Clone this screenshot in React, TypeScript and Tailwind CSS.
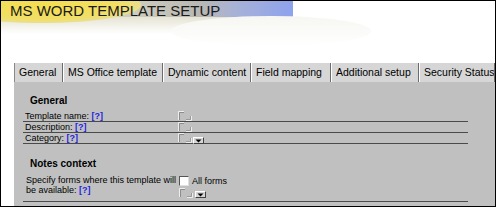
import React from 'react'

// small "broken image" placeholder used next to each field
function Placeholder() {
  return (
    <svg width="14" height="10" viewBox="0 0 14 10" className="block">
      <path d="M0.5 9 V0.5 H6" fill="none" stroke="#eeeeee" strokeWidth="1" />
      <path d="M1.5 9 V1.5 H6" fill="none" stroke="#8c8c8c" strokeWidth="1" />
      <path d="M8 9.5 H13.5 V5" fill="none" stroke="#eeeeee" strokeWidth="1" />
      <path d="M8 8.5 H12.5 V5" fill="none" stroke="#9a9a9a" strokeWidth="1" />
    </svg>
  )
}

function DropButton() {
  return (
    <div className="flex h-[7px] w-[11px] items-center justify-center border border-t-white border-l-white border-b-[#404040] border-r-[#404040] bg-[#d6d6d6]">
      <svg width="7" height="4" viewBox="0 0 7 4" className="block">
        <polygon points="0.5,0.5 6.5,0.5 3.5,3.5" fill="#000" />
      </svg>
    </div>
  )
}

function Help() {
  return <span className="font-bold text-[#2424e0]">[?]</span>
}

const TABS = [
  { label: 'General', w: 'w-[49px]', first: true },
  { label: 'MS Office template', w: 'w-[100px]' },
  { label: 'Dynamic content', w: 'w-[88px]' },
  { label: 'Field mapping', w: 'w-[80px]' },
  { label: 'Additional setup', w: 'w-[88px]' },
  { label: 'Security Status', w: 'flex-1' },
]

function FieldRow({ label, drop }: { label: string; drop?: boolean }) {
  return (
    <div className="flex h-[11px] w-[445px] border-b border-[#4a4a4a]">
      <div className="w-[155px] pl-[2px] text-[9px] leading-[10px] text-black">
        {label} <Help />
      </div>
      <div className="flex items-start">
        <Placeholder />
        {drop && (
          <div className="ml-[1px] mt-[4px]">
            <DropButton />
          </div>
        )}
      </div>
    </div>
  )
}

export default function App() {
  return (
    <div className="flex h-[207px] w-[496px] flex-col overflow-hidden border border-black bg-white font-['Liberation_Sans',Arial,sans-serif]">
      {/* Banner */}
      <div className="relative h-[62px] shrink-0">
        <div className="absolute left-0 top-0 h-[20px] w-[292px] bg-[linear-gradient(to_right,#dcd9c2_0%,#cfcdbd_45%,#b8b8b4_68%,#a8b2d6_80%,#8ea2ee_100%)]" />
        <div className="absolute left-0 top-[16px] h-[17px] w-[300px] bg-[linear-gradient(to_bottom,#e6e4d4,#ffffff)]" />
        <div className="absolute left-[170px] top-[15px] h-[30px] w-[200px] rounded-[50%] bg-[linear-gradient(to_bottom,#f6f6f2,#ffffff)]" />
        <div className="absolute left-[-60px] top-[-14px] h-[36px] w-[200px] rounded-[50%] bg-[radial-gradient(closest-side,#f4de50_0%,#f1df64_75%,#eadf8c_100%)]" />
        <div className="relative pl-[9px] pt-[2px] text-[15px] leading-[15px] text-[#1a1a1a]">
          MS WORD TEMPLATE SETUP
        </div>
      </div>

      {/* Tabs */}
      <div className="ml-[13px] flex h-[19px] shrink-0 bg-[#d6d6d6]">
        {TABS.map((t) => (
          <div
            key={t.label}
            className={`${t.w} overflow-hidden whitespace-nowrap border-r border-r-[#6b6b6b] pl-[4px] text-[10.5px] leading-[19px] text-black ${t.first ? 'border-l border-l-[#8a8a8a]' : 'border-l border-l-white'}`}
          >
            {t.label}
          </div>
        ))}
      </div>

      {/* Panel */}
      <div className="ml-[13px] flex-1 bg-[#c0c0c0] pl-[9px] pt-[13px]">
        <div className="pl-[7px] text-[10px] font-bold leading-[12px] text-black">General</div>

        <div className="mt-[4px]">
          <FieldRow label="Template name:" />
          <FieldRow label="Description:" />
          <FieldRow label="Category:" drop />
        </div>

        <div className="mt-[14px] pl-[7px] text-[10px] font-bold leading-[12px] text-black">Notes context</div>

        <div className="mt-[5px] flex h-[27px] w-[445px] border-b border-[#4a4a4a]">
          <div className="w-[156px] pl-[3px] text-[9px] leading-[10px] text-black">
            <div className="whitespace-nowrap">Specify forms where this template will</div>
            <div>
              be available: <Help />
            </div>
          </div>
          <div className="flex flex-col">
            <div className="mt-[1px] flex items-center">
              <div className="h-[10px] w-[10px] border border-t-[#555] border-l-[#555] border-b-[#e0e0e0] border-r-[#e0e0e0] bg-white" />
              <span className="ml-[3px] text-[9px] leading-[10px] text-black">All forms</span>
            </div>
            <div className="mt-[2px] flex items-start">
              <Placeholder />
              <div className="ml-[2px] mt-[3px]">
                <DropButton />
              </div>
            </div>
          </div>
        </div>
      </div>
    </div>
  )
}
